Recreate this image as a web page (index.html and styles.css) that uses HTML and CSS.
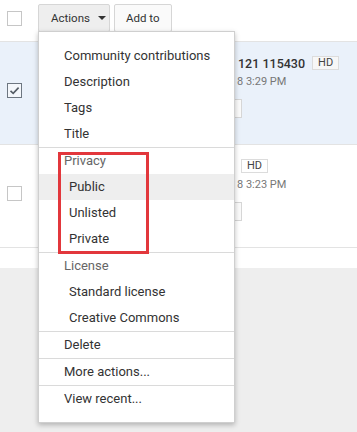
FILE: index.html
```html
<!DOCTYPE html>
<html lang="en">
<head>
  <meta charset="UTF-8" />
  <meta name="viewport" content="width=device-width, initial-scale=1.0"/>
  <title>Video manager - Actions</title>
  <link rel="stylesheet" href="styles.css">
</head>
<body>

  <div class="toolbar">
    <span class="checkbox"></span>
    <button type="button" class="btn btn-open">Actions <span class="caret"></span></button>
    <button type="button" class="btn">Add to</button>
  </div>

  <div class="video-list">
    <div class="video-row selected">
      <div class="check-cell">
        <span class="checkbox checked">
          <svg width="13" height="13" viewBox="0 0 13 13"><path d="M2.5 6.8 L5.2 9.4 L10.6 3.6" fill="none" stroke="#555d66" stroke-width="1.6"/></svg>
        </span>
      </div>
      <div class="details">
        <div class="title-line"><span class="title">121 115430</span><span class="badge">HD</span></div>
        <div class="date">8 3:29 PM</div>
        <span class="edit-btn"></span>
      </div>
    </div>
    <div class="video-row">
      <div class="check-cell"><span class="checkbox"></span></div>
      <div class="details">
        <div class="title-line"><span class="badge badge-only">HD</span></div>
        <div class="date">8 3:23 PM</div>
        <span class="edit-btn"></span>
      </div>
    </div>
  </div>
  <div class="list-footer"></div>

  <!-- dropdown of the Actions button -->
  <div class="menu">
    <div class="menu-group">
      <div class="menu-item">Community contributions</div>
      <div class="menu-item">Description</div>
      <div class="menu-item">Tags</div>
      <div class="menu-item">Title</div>
    </div>
    <div class="menu-group">
      <div class="menu-header">Privacy</div>
      <div class="menu-item sub active">Public</div>
      <div class="menu-item sub">Unlisted</div>
      <div class="menu-item sub">Private</div>
    </div>
    <div class="menu-group">
      <div class="menu-header">License</div>
      <div class="menu-item sub">Standard license</div>
      <div class="menu-item sub">Creative Commons</div>
    </div>
    <div class="menu-group">
      <div class="menu-item">Delete</div>
    </div>
    <div class="menu-group">
      <div class="menu-item">More actions...</div>
    </div>
    <div class="menu-group">
      <div class="menu-item">View recent...</div>
    </div>
  </div>

  <div class="highlight-box"></div>

</body>
</html>
```

FILE: styles.css
```css
body {
  margin: 0;
  font-family: Roboto, 'Liberation Sans', sans-serif;
  color: #333;
  background-color: #eeeeee;
  position: relative;
  height: 432px;
  overflow: hidden;
}
.toolbar {
  background: white;
  height: 42px;
  display: flex;
  align-items: flex-start;
  padding: 4px 0 0 7px;
  box-sizing: border-box;
  border-bottom: 1px solid #e3e3e3;
}
.toolbar .checkbox {
  margin-top: 7px;
  margin-right: 16px;
}
.checkbox {
  display: inline-block;
  width: 15px;
  height: 15px;
  box-sizing: border-box;
  border: 1px solid #c6c6c6;
  background: white;
  position: relative;
}
.checkbox.checked {
  border-color: #6d7680;
  background: #f4f7fb;
}
.checkbox svg {
  position: absolute;
  left: 0;
  top: 0;
}
.btn {
  height: 28px;
  padding: 0 11px;
  margin-right: 4px;
  border: 1px solid #d6d6d6;
  border-radius: 2px;
  background: #fafafa;
  font-family: inherit;
  font-size: 11.5px;
  color: #333;
  display: flex;
  align-items: center;
}
.btn-open {
  width: 72px;
  background: #eeeeee;
  padding-left: 12px;
  padding-right: 8px;
}
.caret {
  width: 0;
  height: 0;
  border-left: 4px solid transparent;
  border-right: 4px solid transparent;
  border-top: 4px solid #333;
  margin-left: 8px;
}
.video-row {
  display: flex;
  height: 102px;
  background: white;
  border-bottom: 1px solid #e3e3e3;
}
.video-row.selected {
  background: #eaf1fa;
}
.check-cell {
  width: 30px;
  padding: 41px 0 0 7px;
  box-sizing: border-box;
}
.details {
  margin-left: 206px;
  display: flex;
  flex-direction: column;
  align-items: flex-start;
}
.title-line {
  margin-top: 11px;
  height: 20px;
  display: flex;
  align-items: center;
}
.title {
  font-size: 12.5px;
  font-weight: 500;
  color: #333;
  padding-left: 2px;
}
.badge {
  margin-left: 7px;
  font-size: 11px;
  line-height: 12px;
  padding: 0 5px;
  border: 1px solid #dcdcdc;
  background: #f7f7f7;
  color: #444;
}
.badge-only {
  margin-left: 5px;
  background: white;
}
.date {
  font-size: 11px;
  line-height: 18px;
  color: #777;
  padding-left: 1px;
}
.edit-btn {
  display: block;
  margin-top: 8px;
  margin-left: -54px;
  width: 60px;
  height: 19px;
  box-sizing: border-box;
  border: 1px solid #d6d6d6;
  background: #fafafa;
}
.list-footer {
  background: white;
  height: 20px;
}
.menu {
  position: absolute;
  left: 38px;
  top: 31px;
  width: 197px;
  box-sizing: border-box;
  background: white;
  border: 1px solid #cfcfcf;
  box-shadow: 0 2px 5px rgba(0, 0, 0, 0.25);
  padding: 11px 0 10px;
  font-size: 13px;
}
.menu-group + .menu-group {
  border-top: 1px solid #dadada;
}
.menu-item {
  line-height: 26px;
  padding-left: 25px;
  color: #333;
  white-space: nowrap;
}
.menu-item.sub {
  padding-left: 30px;
}
.menu-item.active {
  background: #eeeeee;
}
.menu-header {
  line-height: 26px;
  padding-left: 25px;
  color: #666;
}
.highlight-box {
  position: absolute;
  left: 58px;
  top: 152px;
  width: 91px;
  height: 102px;
  box-sizing: border-box;
  border: 3px solid #e2373c;
}
```
